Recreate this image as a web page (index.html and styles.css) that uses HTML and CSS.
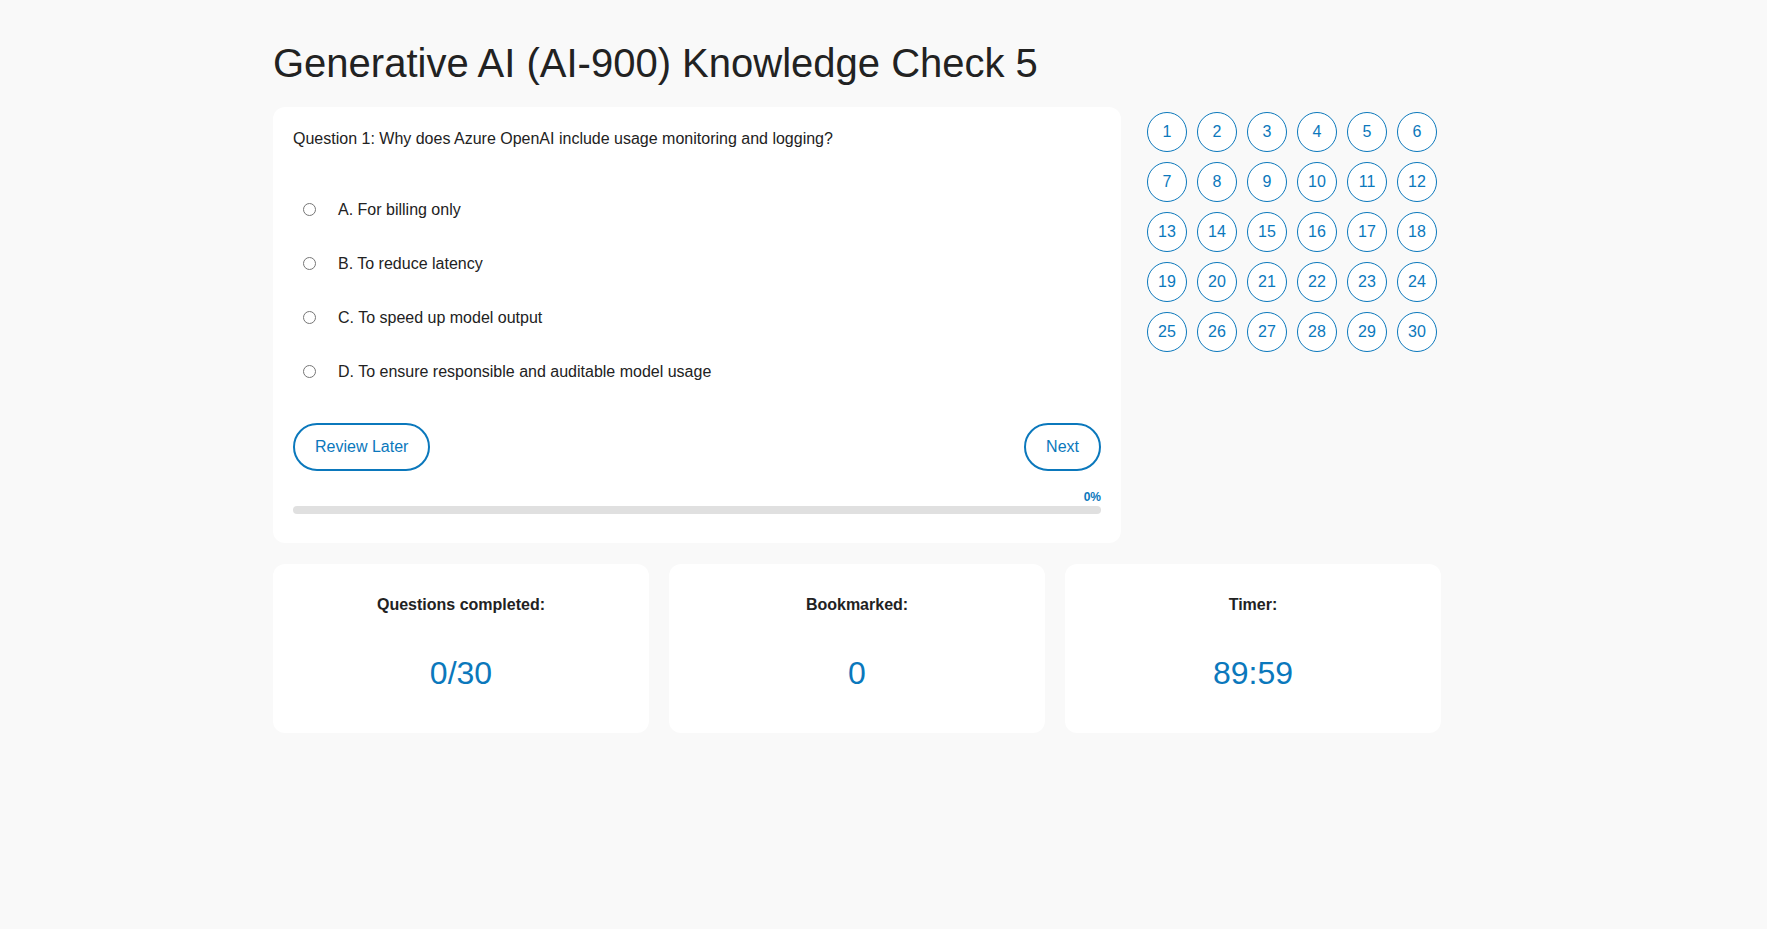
FILE: index.html
```html
<!DOCTYPE html>
<html lang="en">
<head>
<meta charset="utf-8">
<title>Generative AI (AI-900) Knowledge Check 5</title>
<link rel="stylesheet" href="styles.css">
</head>
<body>
<div class="page">
  <h1 class="title">Generative AI (AI-900) Knowledge Check 5</h1>
  <div class="top-row">
    <div class="quiz-card">
      <p class="question">Question 1: Why does Azure OpenAI include usage monitoring and logging?</p>
      <div class="options">
        <label class="option"><input type="radio" name="q1" class="radio"><span>A. For billing only</span></label>
        <label class="option"><input type="radio" name="q1" class="radio"><span>B. To reduce latency</span></label>
        <label class="option"><input type="radio" name="q1" class="radio"><span>C. To speed up model output</span></label>
        <label class="option"><input type="radio" name="q1" class="radio"><span>D. To ensure responsible and auditable model usage</span></label>
      </div>
      <div class="actions">
        <button class="btn">Review Later</button>
        <button class="btn">Next</button>
      </div>
      <div class="progress-label">0%</div>
      <div class="progress"><div class="progress-fill" style="width:0%"></div></div>
    </div>
    <div class="nav-grid">
      <button class="qnum">1</button><button class="qnum">2</button><button class="qnum">3</button><button class="qnum">4</button><button class="qnum">5</button><button class="qnum">6</button>
      <button class="qnum">7</button><button class="qnum">8</button><button class="qnum">9</button><button class="qnum">10</button><button class="qnum">11</button><button class="qnum">12</button>
      <button class="qnum">13</button><button class="qnum">14</button><button class="qnum">15</button><button class="qnum">16</button><button class="qnum">17</button><button class="qnum">18</button>
      <button class="qnum">19</button><button class="qnum">20</button><button class="qnum">21</button><button class="qnum">22</button><button class="qnum">23</button><button class="qnum">24</button>
      <button class="qnum">25</button><button class="qnum">26</button><button class="qnum">27</button><button class="qnum">28</button><button class="qnum">29</button><button class="qnum">30</button>
    </div>
  </div>
  <div class="stats">
    <div class="stat-card">
      <div class="stat-label">Questions completed:</div>
      <div class="stat-value">0/30</div>
    </div>
    <div class="stat-card">
      <div class="stat-label">Bookmarked:</div>
      <div class="stat-value">0</div>
    </div>
    <div class="stat-card">
      <div class="stat-label">Timer:</div>
      <div class="stat-value">89:59</div>
    </div>
  </div>
</div>
</body>
</html>
```
FILE: styles.css
```css
* { box-sizing: border-box; }

body {
  margin: 0;
  background: #f9f9f9;
  font-family: "Liberation Sans", Arial, sans-serif;
  color: #222;
}

.page {
  width: 1168px;
  margin-left: 273px;
  padding-top: 40px;
}

.title {
  font-size: 40px;
  line-height: 46px;
  font-weight: normal;
  margin: 0 0 21px;
  color: #222;
}

.top-row {
  display: flex;
  gap: 20px;
  align-items: flex-start;
}

.quiz-card {
  flex: 1;
  background: #fff;
  border-radius: 12px;
  padding: 20px 20px 20px;
}

.question {
  margin: 0 0 31px;
  font-size: 16px;
  line-height: 24px;
}

.options {
  display: flex;
  flex-direction: column;
}

.option {
  display: flex;
  align-items: center;
  padding: 15px 10px;
  font-size: 16px;
  line-height: 24px;
  cursor: pointer;
}

.option span {
  position: relative;
  top: 1px;
}

.radio {
  width: 13px;
  height: 13px;
  margin: 0 22px 0 0;
}

.actions {
  display: flex;
  justify-content: space-between;
  margin-top: 25px;
}

.btn {
  background: #fff;
  color: #0b78bc;
  border: 2px solid #0b78bc;
  border-radius: 24px;
  padding: 12px 20px;
  font-family: "Liberation Sans", Arial, sans-serif;
  font-size: 16px;
  line-height: 20px;
  cursor: pointer;
}

.progress-label {
  margin-top: 19px;
  text-align: right;
  font-size: 12px;
  line-height: 14px;
  font-weight: bold;
  color: #0b78bc;
}

.progress {
  margin-top: 2px;
  margin-bottom: 9px;
  height: 8px;
  border-radius: 4px;
  background: #e0e0e0;
  overflow: hidden;
}

.progress-fill {
  height: 100%;
  background: #0b78bc;
}

.nav-grid {
  width: 300px;
  display: grid;
  grid-template-columns: repeat(6, 40px);
  grid-auto-rows: 40px;
  gap: 10px;
  padding: 5px 6px;
}

.qnum {
  width: 40px;
  height: 40px;
  padding: 0;
  border: 1px solid #0b78bc;
  border-radius: 50%;
  background: #fff;
  color: #0b78bc;
  font-family: "Liberation Sans", Arial, sans-serif;
  font-size: 16px;
  display: flex;
  align-items: center;
  justify-content: center;
  cursor: pointer;
}

.stats {
  display: grid;
  grid-template-columns: repeat(3, 1fr);
  gap: 20px;
  margin-top: 21px;
}

.stat-card {
  background: #fff;
  border-radius: 12px;
  padding: 32px 20px 41px;
  text-align: center;
}

.stat-label {
  font-size: 16px;
  line-height: 18px;
  font-weight: bold;
  margin-bottom: 41px;
}

.stat-value {
  font-size: 32px;
  line-height: 37px;
  color: #0b78bc;
}
```
